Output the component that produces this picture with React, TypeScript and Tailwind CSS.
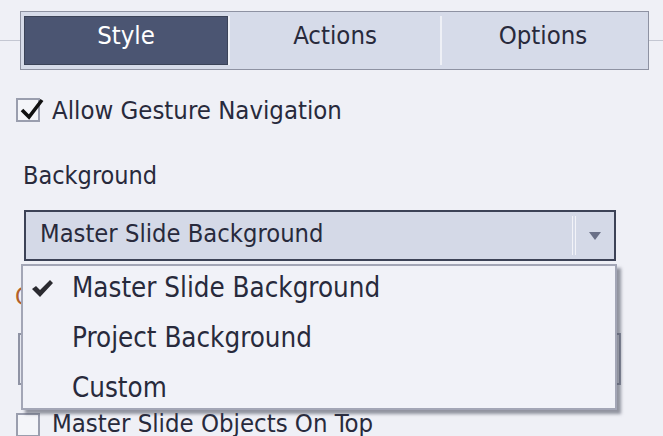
import React from "react";

const tabs = ["Style", "Actions", "Options"];
const menuItems = ["Master Slide Background", "Project Background", "Custom"];

function CheckBox({ checked }: { checked?: boolean }) {
  return (
    <div className="relative w-[24px] h-[24px] border-2 border-[#9a9eae] bg-[#f4f5f9] shrink-0">
      {checked && (
        <svg className="absolute left-[1px] -top-[3px]" width="26" height="24" viewBox="0 0 26 24">
          <path d="M3 13 L10 20 L23 3" fill="none" stroke="#111" strokeWidth="3.6" />
        </svg>
      )}
    </div>
  );
}

export default function App() {
  return (
    <div
      className="relative w-[663px] h-[436px] overflow-hidden bg-[#eff0f6] text-[#282a3c]"
      style={{ fontFamily: '"DejaVu Sans Condensed", "DejaVu Sans", sans-serif' }}
    >
      {/* Tab strip */}
      <div className="flex items-center pt-[11px]">
        <div className="w-[20px] h-px bg-[#c4c7d2]" />
        <div className="flex w-[629px] h-[59px] border border-[#8e92a2] bg-[#d6dbe9] p-[4px] pl-[3px]">
          {tabs.map((t, i) => (
            <div
              key={t}
              className={`flex items-center justify-center pb-[9px] text-[25.5px] leading-none ${
                i === 0
                  ? "w-[204px] bg-[#4b5572] text-white border border-[#3b4358]"
                  : i === 1
                  ? "w-[212px] border-l-2 border-[#eef0f6]"
                  : "flex-1 border-l-2 border-[#eef0f6]"
              }`}
            >
              {t}
            </div>
          ))}
        </div>
        <div className="flex-1 h-px bg-[#c4c7d2]" />
      </div>

      {/* Gesture checkbox */}
      <div className="flex items-center h-[24px] gap-[12px] pl-[16px] mt-[28px]">
        <CheckBox checked />
        <span className="text-[25.5px] leading-[24px]">Allow Gesture Navigation</span>
      </div>

      {/* Background label */}
      <div className="h-[24px] pl-[23px] mt-[42px] text-[25px] leading-[24px]">Background</div>

      {/* Select */}
      <div className="ml-[24px] mt-[22px] w-[592px] h-[51px] border-2 border-[#3c4256] bg-[#d4d9e7] flex items-center">
        <span className="flex-1 pl-[14px] pb-[4px] text-[25.3px] leading-none">Master Slide Background</span>
        <div className="h-[39px] w-[4px] border-x border-[#f2f3f8]" />
        <svg className="mx-[13px]" width="12" height="8" viewBox="0 0 12 8">
          <path d="M0 0 H12 L6 8 Z" fill="#6a7087" />
        </svg>
      </div>

      {/* Content behind the open menu */}
      <div className="h-[24px] pl-[15px] mt-[24px] text-[25px] leading-[24px] text-[#b3602a]">Color</div>
      <div className="ml-[18px] mt-[24px] w-[603px] h-[52px] border-2 border-[#8f93a4] bg-[#e6e8f0]" />

      <div className="flex items-center h-[24px] gap-[12px] pl-[16px] mt-[28px]">
        <CheckBox />
        <span className="text-[25.5px] leading-[24px] -mt-[5px]">Master Slide Objects On Top</span>
      </div>

      {/* Dropdown menu */}
      <div className="absolute left-[21px] top-[264px] w-[596px] h-[146px] bg-[#f1f2f8] border-2 border-[#a3a6b6] shadow-[4px_4px_3px_rgba(70,72,90,0.55)]">
        {menuItems.map((m, i) => (
          <div key={m} className="relative flex items-center h-[50px] pb-[6px] pl-[49px] text-[27.5px] leading-none">
            {i === 0 && (
              <svg className="absolute left-[9px] top-[14px]" width="21" height="17" viewBox="0 0 21 17">
                <path d="M0 9 L4 6 L8 10 L18 0 L21 3 L8 17 Z" fill="#2a2a30" />
              </svg>
            )}
            {m}
          </div>
        ))}
      </div>
    </div>
  );
}
